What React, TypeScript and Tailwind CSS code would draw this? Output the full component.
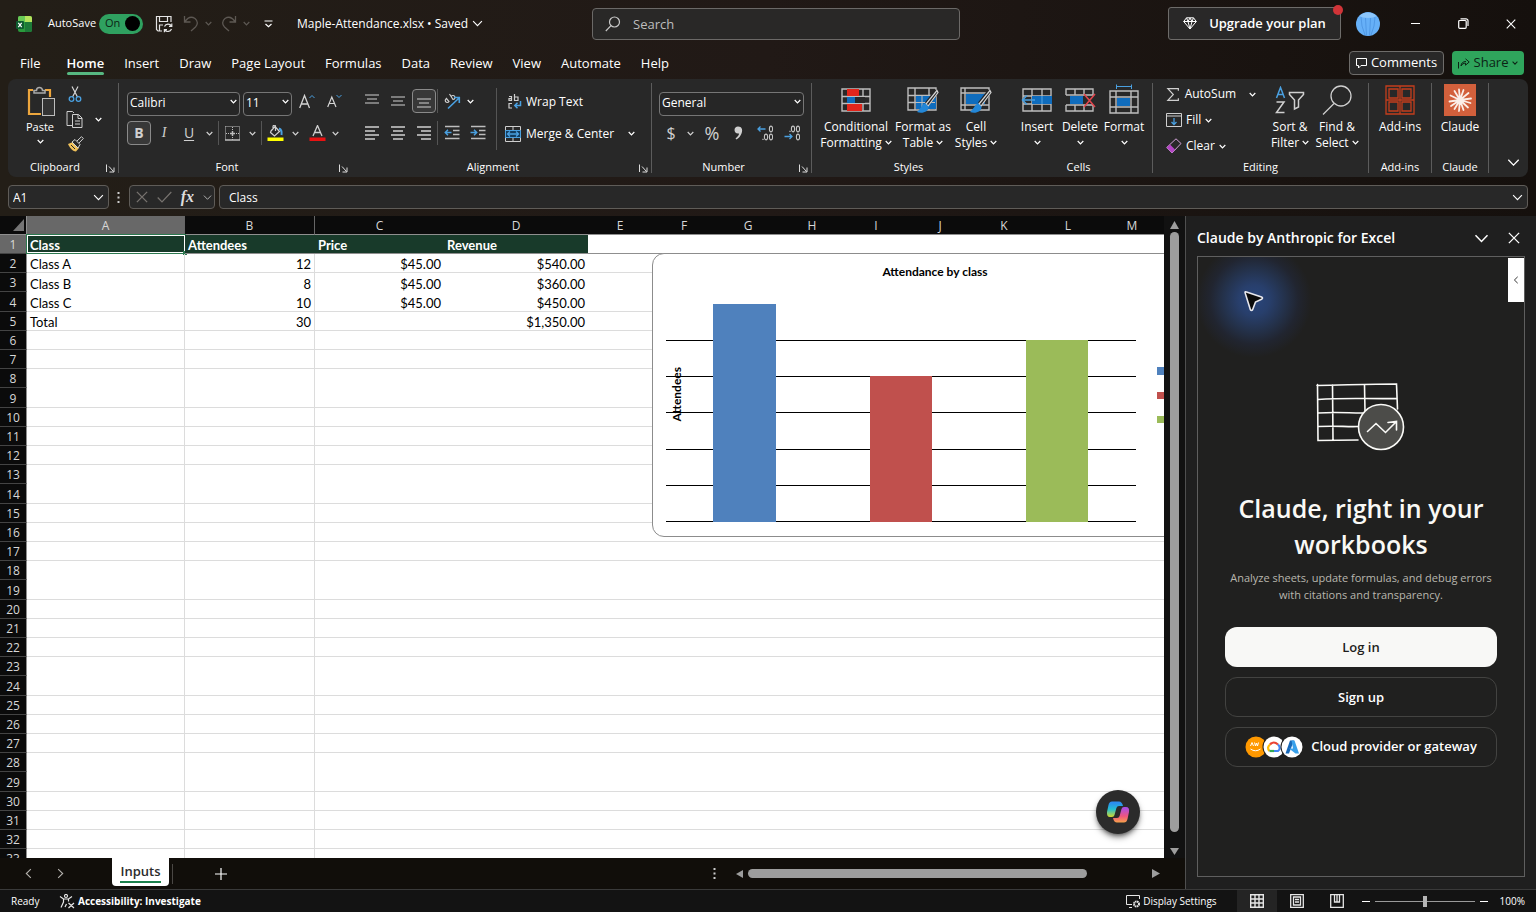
import { useState } from 'react'
import type { ReactNode } from 'react'
import clsx from 'clsx'

const TABS = ['File', 'Home', 'Insert', 'Draw', 'Page Layout', 'Formulas', 'Data', 'Review', 'View', 'Automate', 'Help']

const COLUMNS = [
  { name: 'A', width: 'w-[158px]' },
  { name: 'B', width: 'w-[130px]' },
  { name: 'C', width: 'w-[129px]' },
  { name: 'D', width: 'w-[144px]' },
  { name: 'E', width: 'w-16' },
  { name: 'F', width: 'w-16' },
  { name: 'G', width: 'w-16' },
  { name: 'H', width: 'w-16' },
  { name: 'I', width: 'w-16' },
  { name: 'J', width: 'w-16' },
  { name: 'K', width: 'w-16' },
  { name: 'L', width: 'w-16' },
  { name: 'M', width: 'w-16' },
]

const DATA = [
  ['Class', 'Attendees', 'Price', 'Revenue'],
  ['Class A', '12', '$45.00', '$540.00'],
  ['Class B', '8', '$45.00', '$360.00'],
  ['Class C', '10', '$45.00', '$450.00'],
  ['Total', '30', '', '$1,350.00'],
]

function Chevron({ size = 7, className = '' }: { size?: number; className?: string }) {
  return (
    <svg width={size} height={size} viewBox="0 0 8 8" fill="none" stroke="currentColor" strokeWidth={size > 7 ? 0.8 : 1.4} className={clsx('shrink-0', className)}>
      <path d="M0.8 2.3L4 5.6L7.2 2.3" />
    </svg>
  )
}

function CloseIcon({ size = 11 }: { size?: number }) {
  return (
    <svg width={size} height={size} viewBox="0 0 11 11" stroke="currentColor" strokeWidth="1.2">
      <path d="M0.8 0.8L10.2 10.2M10.2 0.8L0.8 10.2" />
    </svg>
  )
}

function ToolButton({ label, width = 'w-6', active, children }: { label: string; width?: string; active?: boolean; children: ReactNode }) {
  return (
    <button
      aria-label={label}
      className={clsx('h-6 shrink-0 flex items-center justify-center rounded', width, active && 'border border-[#8a8a8a] bg-[#383838]')}
    >
      {children}
    </button>
  )
}

function BigButton({ lines, icon, chevron = 'none', width }: { lines: string[]; icon: ReactNode; chevron?: 'none' | 'inline' | 'below'; width: string }) {
  return (
    <button className={clsx('flex flex-col items-center text-xs leading-4 whitespace-nowrap shrink-0', width)}>
      <span className="h-8 mb-[3px] flex items-center justify-center">{icon}</span>
      {lines.map((line, i) => (
        <span key={line} className="flex items-center gap-[3px]">
          {line}
          {chevron === 'inline' && i === lines.length - 1 && <Chevron className="-mt-px" />}
        </span>
      ))}
      {chevron === 'below' && <Chevron className="mt-1" />}
    </button>
  )
}

function Group({ label, width, divider, launcher, children }: { label: string; width: string; divider?: boolean; launcher?: boolean; children: ReactNode }) {
  return (
    <section className={clsx('relative h-[90px] flex flex-col shrink-0', width, divider && 'border-r border-[#5c5c5c]')}>
      <div className="flex-1 flex">{children}</div>
      <h2 className={clsx('text-[11px] leading-3 text-center', launcher && 'pr-4')}>{label}</h2>
      {launcher && (
        <button aria-label={label + ' settings'} className="absolute right-[3px] bottom-0">
          <svg width="9" height="9" viewBox="0 0 9 9" fill="none" stroke="#ddd">
            <path d="M0.5 8V0.5M3 2.5L7.5 7.5M8 3.5V8H3.5" />
          </svg>
        </button>
      )}
    </section>
  )
}

function Combo({ label, value, width }: { label: string; value: string; width: string }) {
  return (
    <div className={clsx('relative h-6 shrink-0', width)}>
      <select aria-label={label} defaultValue={value} className="w-full h-full appearance-none bg-[#262626] border border-[#767676] rounded px-[2px] pb-px text-xs">
        <option>{value}</option>
      </select>
      <Chevron className="absolute right-[3px] top-[9px] pointer-events-none" />
    </div>
  )
}

function Lines({ rows, thick }: { rows: number[][]; thick?: boolean }) {
  return (
    <svg width="16" height="16" viewBox="0 0 16 16" stroke="#d0d0d0" strokeWidth={thick ? 1.6 : 1.2}>
      {rows.map(([y, x1, x2]) => (
        <path key={y} d={`M${x1} ${y}H${x2}`} />
      ))}
    </svg>
  )
}

function Indent({ right }: { right?: boolean }) {
  return (
    <svg width="16" height="16" viewBox="0 0 16 16" fill="none" strokeWidth="1.5">
      <path stroke="#bdbdbd" d="M1 1.500H15.500M9 5.500H15.500M9 9.500H15.500M1 13.500H15.500" />
      <path stroke="#4aa0e0" d={right ? 'M0.500 7.500H6.500M4 4.800L6.700 7.500L4 10.200' : 'M7.500 7.500H1.500M4 4.800L1.300 7.500L4 10.200'} />
    </svg>
  )
}

function SheetGrid() {
  return <path fill="none" stroke="#bdbdbd" strokeWidth="1.400" d="M1 2H29V24H1ZM1 9.500H29M1 16.500H29M8 2V24M22 2V24" />
}

function Brush() {
  return (
    <>
      <path d="M30 5L20 18" stroke="#262626" strokeWidth="5" />
      <path d="M30 4.500L19 18L21 20L31 6.500Z" fill="#262626" stroke="#d5d5d5" strokeWidth="1.200" />
      <path d="M19 18C15 17 15 22 10 26C15 28 22 26 21.500 20.500Z" fill="#2387d8" />
    </>
  )
}

function TitleBar() {
  const [autoSave, setAutoSave] = useState(true)
  return (
    <header className="relative h-[47px] flex items-center text-[11px]">
      <svg className="ml-4 shrink-0" width="16" height="16" viewBox="0 0 16 16">
        <rect x="2" width="14" height="16" rx="2" fill="#2a9a3c" />
        <path d="M9 0h5a2 2 0 0 1 2 2v4H9z" fill="#b5e35c" />
        <path d="M4 0h5v6H2V2a2 2 0 0 1 2-2z" fill="#68c956" />
        <path d="M9 6h7v8a2 2 0 0 1-2 2H9z" fill="#1d7a38" />
        <rect y="5" width="8" height="8" rx="1" fill="#0e5c2f" />
        <path d="M2.300 6.800L5.700 11.200M5.700 6.800L2.300 11.200" stroke="#fff" strokeWidth="1.200" />
      </svg>
      <label className="ml-4 flex items-center gap-[7px] whitespace-nowrap">
        <span className="w-11">AutoSave</span>
        <input type="checkbox" checked={autoSave} onChange={(e) => setAutoSave(e.target.checked)} className="sr-only" />
        <span className="w-11 h-5 rounded-full bg-[#2fa160] text-[#0c2415] flex items-center justify-between pl-[6px] pr-[3px]">
          On
          <span className="size-[15px] rounded-full bg-black" />
        </span>
      </label>
      <button aria-label="Save" className="ml-3">
        <svg width="18" height="18" viewBox="0 0 18 18" fill="none" stroke="#e4e4e4" strokeWidth="1.200">
          <path d="M7 16H3L1.500 14.500V1.500H16V7M4.500 1.500V6.500H12.500V1.500M4.500 16V10H8" />
          <path d="M9.500 11.500A4 4 0 0 1 16.500 11M16.800 8.500V11.300H14M16.500 14A4 4 0 0 1 9.700 15M9.400 17.300V14.700H12" />
        </svg>
      </button>
      <button aria-label="Undo" className="ml-[10px] flex items-center gap-[6px] text-[#5d5853]">
        <svg width="16" height="17" viewBox="0 0 16 17" fill="none" stroke="currentColor" strokeWidth="1.300">
          <path d="M1.500 1V7H7.500M1.800 6.800C5 2 9 1.500 12 3.500C15 6 15 9.500 12.500 12L8 16" />
        </svg>
        <Chevron />
      </button>
      <button aria-label="Redo" className="ml-[9px] flex items-center gap-[6px] text-[#5d5853]">
        <svg width="16" height="17" viewBox="0 0 16 17" fill="none" stroke="currentColor" strokeWidth="1.300">
          <path d="M14.500 1V7H8.500M14.200 6.800C11 2 7 1.500 4 3.500C1 6 1 9.500 3.500 12L8 16" />
        </svg>
        <Chevron />
      </button>
      <button aria-label="Customize toolbar" className="ml-[14px]">
        <svg width="9" height="8" viewBox="0 0 9 8" fill="none" stroke="#fff" strokeWidth="1.200">
          <path d="M0.500 1H8.500M1.500 4L4.500 6.800L7.500 4" />
        </svg>
      </button>
      <button className="ml-6 flex items-center gap-1 whitespace-nowrap text-xs">
        Maple-Attendance.xlsx • Saved
        <Chevron size={11} className="text-white" />
      </button>

      <div className="absolute left-1/2 -translate-x-1/2 ml-2 top-2 w-[368px] h-8 rounded bg-[#292827] border border-[#6b6967] flex items-center">
        <svg className="ml-3" width="16" height="16" viewBox="0 0 16 16" fill="none" stroke="#c8c8c8" strokeWidth="1.200">
          <circle cx="9.500" cy="6" r="5" />
          <path d="M6 9.700L0.800 15" />
        </svg>
        <input type="search" aria-label="Search" placeholder="Search" className="ml-3 h-full flex-1 bg-transparent text-[13px] placeholder:text-[#bdbdbd] outline-none" />
      </div>

      <div className="ml-auto mr-px flex items-center">
        <button className="relative h-[33px] w-[173px] rounded-[3px] border border-[#6e6c6a] bg-[#292828] flex items-center justify-center gap-3 text-[13px] font-semibold whitespace-nowrap">
          <svg width="14" height="13" viewBox="0 0 14 13" fill="none" stroke="#fff">
            <path d="M3.500 0.800H10.500L13.300 4.500L7 12L0.700 4.500ZM0.700 4.500H13.300M3.500 0.800L5 4.500L7 12L9 4.500L10.500 0.800M5 4.500L7 1L9 4.500" />
          </svg>
          Upgrade your plan
          <span className="absolute -top-[3px] -right-[3px] size-[10px] rounded-full bg-[#d13438]" />
        </button>
        <button aria-label="Account" className="ml-[15px] mr-[11px]">
          <svg width="24" height="24" viewBox="0 0 24 24">
            <circle cx="12" cy="12" r="12" fill="#66b0f8" />
            <path d="M3.500 4A12 12 0 0 1 20.500 4C17 6.500 7 6.500 3.500 4" fill="#8cc6fb" />
            <path d="M5 5Q5 14 9 23M9.500 6L10.500 24M14.500 6L13.500 24M19 5Q19 14 15 23" stroke="#5099e6" fill="none" />
          </svg>
        </button>
        <button aria-label="Minimize" className="w-12 flex justify-center"><span className="w-[9px] h-px bg-white" /></button>
        <button aria-label="Restore" className="w-12 flex justify-center">
          <svg width="11" height="11" viewBox="0 0 11 11" fill="none" stroke="#fff" strokeWidth="1.200">
            <rect x="0.700" y="2.500" width="7.500" height="7.800" rx="1" />
            <path d="M2.500 0.800H8A2 2 0 0 1 10 2.800V8" />
          </svg>
        </button>
        <button aria-label="Close" className="w-12 flex justify-center"><CloseIcon size={10} /></button>
      </div>
    </header>
  )
}

function RibbonTabs() {
  return (
    <nav className="h-8 flex items-center pl-[10px] pr-3 text-[13px]">
      {TABS.map((tab) => (
        <button key={tab} className={clsx('relative h-8 px-[10px] pt-[2px] whitespace-nowrap', tab === 'File' && 'mr-[6px]', tab === 'Home' && 'font-semibold')}>
          {tab}
          {tab === 'Home' && <span className="absolute left-[10px] right-[10px] bottom-1 h-[3px] rounded-full bg-[#57b881]" />}
        </button>
      ))}
      <button className="ml-auto h-6 w-[95px] rounded border border-[#6e6c6a] bg-[#292828] flex items-center justify-center gap-1">
        <svg width="11" height="11" viewBox="0 0 11 11" fill="none" stroke="#fff">
          <path d="M0.500 0.500H10.500V7.500H5L2.500 10V7.500H0.500Z" />
        </svg>
        Comments
      </button>
      <button className="ml-2 h-6 w-[72px] rounded bg-[#2fa55c] text-[#0c2415] flex items-center justify-center gap-1">
        <svg width="12" height="11" viewBox="0 0 12 11" fill="none" stroke="currentColor">
          <path d="M0.500 4V10.500M3 8C3.200 5 5 3.500 8 3.500M7.500 0.800L11.200 4L7.500 7.200V5.200C5.500 5.200 4.200 6 3 8" />
        </svg>
        Share
        <Chevron size={6} />
      </button>
    </nav>
  )
}

function Ribbon() {
  return (
    <div className="mx-2 h-[98px] pt-1 rounded-lg bg-[#282828] flex shrink-0 overflow-hidden">
      <Group label="Clipboard" width="w-[111px]" divider launcher>
        <button className="ml-2 w-12 pt-[3px] flex flex-col items-center text-[11px] leading-4">
          <svg className="ml-1 mb-[2px]" width="30" height="31" viewBox="0 0 30 31" fill="none">
            <path d="M6 4H2V28H14M18 4H23V11" stroke="#eda63d" strokeWidth="2.200" />
            <path d="M7 7V4.500H9.500A3 3 0 0 1 15.500 4.500H18V7Z" stroke="#aaa" strokeWidth="1.500" />
            <rect x="15.500" y="12.500" width="12" height="17" fill="#333" stroke="#bdbdbd" />
          </svg>
          Paste
          <Chevron className="mt-[3px]" />
        </button>
        <div className="ml-[2px] pt-[3px] flex flex-col items-center gap-2">
          <button aria-label="Cut">
            <svg width="16" height="17" viewBox="0 0 16 17" fill="none">
              <path d="M5 0.500L10.500 11M11 0.500L5.500 11" stroke="#d5d5d5" strokeWidth="1.200" />
              <circle cx="4.500" cy="13" r="2.300" stroke="#4aa0e0" strokeWidth="1.300" />
              <circle cx="11.500" cy="13" r="2.300" stroke="#4aa0e0" strokeWidth="1.300" />
            </svg>
          </button>
          <button aria-label="Copy">
            <svg width="18" height="17" viewBox="0 0 18 17" fill="none" stroke="#cfcfcf">
              <path d="M6 14.500H1V0.500H6.500L8 2M6.500 3.500H12.500L16 7V16.500H6.500ZM12 3.500V7.500H16M9 10H14M9 13H14" />
            </svg>
          </button>
          <button aria-label="Format painter">
            <svg width="17" height="16" viewBox="0 0 17 16">
              <path d="M1 8L6 6L12 12L9 15.500C5 15 3 12 1 8Z" fill="#f0c15a" />
              <path d="M5 6L8 3.500L13 8.500L11 12ZM10 5L14.500 0.700L16.300 2.500L12 7" fill="#282828" stroke="#d5d5d5" />
              <path d="M4 9L8 13" stroke="#282828" />
            </svg>
          </button>
        </div>
        <button aria-label="Copy options" className="ml-[11px] mt-[30px] h-3"><Chevron /></button>
      </Group>

      <Group label="Font" width="w-[232px]" launcher>
        <div className="pl-2 pt-[6px] flex flex-col gap-2">
          <div className="flex items-center gap-[3px]">
            <Combo label="Font" value="Calibri" width="w-[113px]" />
            <Combo label="Font size" value="11" width="w-[49px]" />
            <ToolButton label="Increase font size">
              <svg width="16" height="15" viewBox="0 0 16 15" fill="none"><path d="M0.700 14L5.500 1.500L10.500 14M2.300 10H8.900" stroke="#d5d5d5" strokeWidth="1.300" /><path d="M10.500 4L13 1.500L15.500 4" stroke="#4aa0e0" /></svg>
            </ToolButton>
            <ToolButton label="Decrease font size">
              <svg width="15" height="14" viewBox="0 0 15 14" fill="none"><path d="M0.700 13L4.800 3L9 13M2.200 9.500H7.500" stroke="#d5d5d5" strokeWidth="1.200" /><path d="M9.500 1L12 3.500L14.500 1" stroke="#4aa0e0" /></svg>
            </ToolButton>
          </div>
          <div className="flex items-center text-sm text-[#d0d0d0]">
            <ToolButton label="Bold" active><b>B</b></ToolButton>
            <ToolButton label="Italic" width="w-[26px]"><i className="font-['Liberation_Serif',serif]">I</i></ToolButton>
            <ToolButton label="Underline"><span className="underline underline-offset-2">U</span></ToolButton>
            <ToolButton label="Underline options" width="w-4"><Chevron /></ToolButton>
            <span className="w-px h-6 mx-px bg-[#555]" />
            <ToolButton label="Borders">
              <svg width="15" height="15" viewBox="0 0 15 15" fill="none" stroke="#bdbdbd"><path strokeDasharray="1 1" d="M0.500 0.500H14.500V14M0.500 0.500V14M7.500 1V14M1 7.500H14" /><path d="M0 14H15M7.500 5V10M5 7.500H10" strokeWidth="1.500" /></svg>
            </ToolButton>
            <ToolButton label="Border options" width="w-4"><Chevron /></ToolButton>
            <span className="w-px h-6 mx-px bg-[#555]" />
            <ToolButton label="Fill color">
              <svg width="17" height="17" viewBox="0 0 17 17" fill="none">
                <path d="M4 6L8 1.500L12.500 6.500L7.500 11L3.500 7.500ZM6 4V1.500A1.200 1.200 0 0 1 8.500 1.500V6" stroke="#cfcfcf" strokeWidth="1.200" />
                <path d="M12 3.500C14.500 4.500 15 7 14.500 10" stroke="#4aa0e0" strokeWidth="2" />
                <path d="M0.500 12.500H16.500V16H0.500Z" fill="#ff0" />
              </svg>
            </ToolButton>
            <ToolButton label="Fill options" width="w-4"><Chevron /></ToolButton>
            <ToolButton label="Font color" width="w-7">
              <svg width="17" height="17" viewBox="0 0 17 17" fill="none"><path d="M4 11L8.500 0.500L13 11M5.500 7.500H11.500" stroke="#cfcfcf" strokeWidth="1.300" /><path d="M0.500 12.500H16.500V16H0.500Z" fill="#e81212" /></svg>
            </ToolButton>
            <ToolButton label="Font color options" width="w-2"><Chevron /></ToolButton>
          </div>
        </div>
      </Group>

      <Group label="Alignment" width="w-[301px]" divider launcher>
        <div className="pl-[9px] pt-[6px] flex flex-col gap-2">
          <div className="flex items-center gap-[2px]">
            <ToolButton label="Top align"><Lines rows={[[2, 1, 15], [6, 3, 13], [10, 1, 15]]} /></ToolButton>
            <ToolButton label="Middle align"><Lines rows={[[4, 1, 15], [8, 3, 13], [12, 1, 15]]} /></ToolButton>
            <ToolButton label="Bottom align" active><Lines rows={[[6, 1, 15], [10, 3, 13], [14, 1, 15]]} /></ToolButton>
            <span className="-ml-px w-px h-6 bg-[#555]" />
            <ToolButton label="Orientation">
              <svg width="18" height="17" viewBox="0 0 18 17" fill="none"><path d="M4 5.500A2 2 0 1 0 6 8.500L3 5M6.500 1L10 6.500A2 2 0 1 0 8 4" stroke="#cfcfcf" strokeWidth="1.200" /><path d="M5 15.500L15.500 5.500M11 4.500H16.300V10" stroke="#4aa0e0" strokeWidth="1.600" /></svg>
            </ToolButton>
            <ToolButton label="Orientation options" width="w-2"><Chevron /></ToolButton>
          </div>
          <div className="flex items-center gap-[2px]">
            <ToolButton label="Align left"><Lines thick rows={[[2, 1, 15], [6, 1, 11], [10, 1, 15], [14, 1, 11]]} /></ToolButton>
            <ToolButton label="Center"><Lines thick rows={[[2, 1, 15], [6, 3, 13], [10, 1, 15], [14, 3, 13]]} /></ToolButton>
            <ToolButton label="Align right"><Lines thick rows={[[2, 1, 15], [6, 5, 15], [10, 1, 15], [14, 5, 15]]} /></ToolButton>
            <span className="-ml-px w-px h-6 bg-[#555]" />
            <ToolButton label="Decrease indent"><Indent /></ToolButton>
            <ToolButton label="Increase indent"><Indent right /></ToolButton>
          </div>
        </div>
        <div className="ml-[6px] mt-[5px] h-[62px] pl-2 border-l border-[#555] flex flex-col gap-2 text-xs">
          <button className="h-6 mt-px pt-px flex items-center gap-1 whitespace-nowrap">
            <svg width="17" height="17" viewBox="0 0 17 17" fill="none" strokeWidth="1.200">
              <path stroke="#cfcfcf" d="M4 3.500H6.500V7.500H4V5.700H6.500M9.500 1V7.500H13V4H9.500M7 10.500H4V15H7" />
              <path stroke="#4aa0e0" strokeWidth="1.500" d="M15.500 8V12.500H10M12.500 9.800L9.800 12.500L12.500 15.200" />
            </svg>
            Wrap Text
          </button>
          <button className="h-6 pt-px flex items-center gap-1 whitespace-nowrap">
            <svg width="17" height="16" viewBox="0 0 17 16" fill="none">
              <path stroke="#cfcfcf" d="M0.500 0.500H15.500V15.500H0.500ZM8 0.500V4M8 12V15.500" />
              <path fill="#123c5e" stroke="#4aa0e0" d="M0.500 4.500H15.500V11.500H0.500Z" />
              <path stroke="#4aa0e0" strokeWidth="1.300" d="M2.500 8H13.500M5 5.500L2.500 8L5 10.500M11 5.500L13.500 8L11 10.500" />
            </svg>
            <span className="w-[98px] text-left">Merge &amp; Center</span>
            <Chevron />
          </button>
        </div>
      </Group>

      <Group label="Number" width="w-40" divider launcher>
        <div className="pl-[7px] pt-[6px] flex flex-col gap-2">
          <Combo label="Number format" value="General" width="w-[145px]" />
          <div className="flex items-center text-[#d0d0d0]">
            <ToolButton label="Currency"><span className="text-base">$</span></ToolButton>
            <ToolButton label="Currency options" width="w-[14px]"><Chevron /></ToolButton>
            <ToolButton label="Percent" width="w-[30px]"><span className="text-lg">%</span></ToolButton>
            <ToolButton label="Comma style" width="w-[22px]"><svg width="9" height="14" viewBox="0 0 9 14" fill="#cfcfcf"><path d="M4 0.500C8 0.500 9 4 7.500 7.500C6.500 10 5 12 2.500 13.500L1.500 12.500C4 10.500 5 9 5 7.500C2 8 0.500 6 0.500 4C0.500 2 2 0.500 4 0.500" /></svg></ToolButton>
            <ToolButton label="Increase decimal" width="w-8"><DecimalIcon /></ToolButton>
            <ToolButton label="Decrease decimal" width="w-[22px]"><DecimalIcon less /></ToolButton>
          </div>
        </div>
      </Group>

      <Group label="Styles" width="w-[193px]">
        <div className="pl-2 pt-[1px] flex">
          <BigButton width="w-[72px]" lines={['Conditional', 'Formatting']} chevron="inline" icon={
            <svg width="30" height="26" viewBox="0 0 30 26"><SheetGrid /><path d="M6 2H18V9H6ZM6 17H21V24H6Z" fill="#e1251b" /><path d="M6 10H14V16H6Z" fill="#0f6cbd" /><path d="M14 10H24V16H14Z" fill="#282828" /></svg>
          } />
          <BigButton width="w-[62px]" lines={['Format as', 'Table']} chevron="inline" icon={
            <svg width="32" height="28" viewBox="0 0 32 28"><SheetGrid /><path d="M9 10H29V23H9Z" fill="#0f6cbd" /><path d="M15 9V24M9 16.500H28" stroke="#bdbdbd" /><Brush /></svg>
          } />
          <BigButton width="w-11" lines={['Cell', 'Styles']} chevron="inline" icon={
            <svg width="32" height="28" viewBox="0 0 32 28"><path fill="none" stroke="#bdbdbd" strokeWidth="1.400" d="M1 2H29V24H1ZM5 2V24M1 7H29M1 19H29" /><path d="M6 8H25V18H6Z" fill="#0f6cbd" /><Brush /></svg>
          } />
        </div>
      </Group>

      <Group label="Cells" width="w-[148px]" divider>
        <div className="pl-[11px] pt-[1px] flex">
          <BigButton width="w-[42px]" lines={['Insert']} chevron="below" icon={
            <svg width="32" height="26" viewBox="0 0 32 26"><path fill="none" stroke="#bdbdbd" strokeWidth="1.400" d="M2 2H30V24H2ZM2 9H30M2 17H30M11 2V24M21 2V24" /><path d="M11 9H31V17H11Z" fill="#0f6cbd" /><path d="M21 9V17" stroke="#58a8e6" /><path d="M14 13H1.500M6 8.500L1.500 13L6 17.500" fill="none" stroke="#4aa0e0" strokeWidth="1.500" /></svg>
          } />
          <BigButton width="w-11" lines={['Delete']} chevron="below" icon={
            <svg width="31" height="26" viewBox="0 0 31 26"><path fill="none" stroke="#bdbdbd" strokeWidth="1.400" d="M1 8V2H28V8M1 18V24H28V18M1 8H28M1 18H28M10 2V8M19 2V8M10 18V24M19 18V24" /><path d="M5 9H18V17H5Z" fill="#0f6cbd" /><path d="M19 7L30 20M30 7L19 20" stroke="#e0444c" strokeWidth="1.600" /></svg>
          } />
          <BigButton width="w-11" lines={['Format']} chevron="below" icon={
            <svg width="30" height="32" viewBox="0 0 30 32"><path fill="none" stroke="#bdbdbd" strokeWidth="1.400" d="M1 7H29V29H1ZM1 13H29M1 23H29M7 7V29M22 7V29" /><path d="M8 14H21V22H8Z" fill="#0f6cbd" /><path d="M7.500 0.500V5M22.500 0.500V5M7.500 2.500H22.500" stroke="#4aa0e0" /></svg>
          } />
        </div>
      </Group>

      <Group label="Editing" width="w-[216px]" divider>
        <div className="pl-[13px] pt-[2px] w-[103px] flex flex-col gap-2 text-xs">
          <button className="h-[18px] flex items-center gap-1 whitespace-nowrap">
            <svg width="16" height="15" viewBox="0 0 16 15" fill="none" stroke="#cfcfcf" strokeWidth="1.300"><path d="M13.500 3.500V1H2L8 7.500L2 14H13.500V11.500" /></svg>
            <span className="w-[66px] text-left">AutoSum</span>
            <Chevron />
          </button>
          <button className="h-[18px] flex items-center gap-1 whitespace-nowrap">
            <svg width="16" height="14" viewBox="0 0 16 14" fill="none"><path d="M0.500 0.500H15.500V13.500H0.500ZM0.500 3H15.500" stroke="#cfcfcf" /><path d="M8 5V11.500M5.500 9L8 11.500L10.500 9" stroke="#4aa0e0" strokeWidth="1.300" /></svg>
            Fill <Chevron />
          </button>
          <button className="h-[18px] flex items-center gap-1 whitespace-nowrap">
            <svg width="16" height="16" viewBox="0 0 16 16" fill="none"><path d="M0.700 9.500L10 0.800L15 5.500L6 15Z" stroke="#d0a3d6" /><path d="M0.700 9.500L4 6.500L9 11.500L6 15Z" fill="#b345c4" /></svg>
            Clear <Chevron />
          </button>
        </div>
        <div className="pt-[1px] flex">
          <BigButton width="w-[68px]" lines={['Sort &', 'Filter']} chevron="inline" icon={
            <svg width="30" height="28" viewBox="0 0 30 28" fill="none" strokeWidth="1.500"><path d="M1.500 12L5.500 1.500L9.500 12M3 8.500H8" stroke="#4aa0e0" /><path d="M1.500 16H9L1.500 26.500H9.500" stroke="#cfcfcf" /><path d="M14.500 6.500H28.500V8.500L23.500 14V21L19.500 23V14L14.500 8.500Z" stroke="#cfcfcf" /></svg>
          } />
          <BigButton width="w-[26px]" lines={['Find &', 'Select']} chevron="inline" icon={
            <svg width="30" height="31" viewBox="0 0 30 31" fill="none" stroke="#cfcfcf" strokeWidth="1.300"><circle cx="19" cy="11" r="10" /><path d="M12 18.500L1 29.500" /></svg>
          } />
        </div>
      </Group>

      <Group label="Add-ins" width="w-[63px]" divider>
        <div className="pt-[1px] w-full flex justify-center">
          <BigButton width="w-14" lines={['Add-ins']} icon={
            <svg width="30" height="30" viewBox="0 0 30 30" fill="none" stroke="#c43e1c" strokeWidth="1.300"><path d="M1 1H29V29H1ZM4 4H13V13H4ZM17 4H26V13H17ZM4 17H13V26H4ZM17 17H26V26H17Z" /><path d="M15 1V29M1 15H29" /></svg>
          } />
        </div>
      </Group>

      <Group label="Claude" width="w-[57px]" divider>
        <div className="pt-[1px] w-full flex justify-center">
          <BigButton width="w-12" lines={['Claude']} icon={
            <svg width="32" height="32" viewBox="0 0 32 32" stroke="#fbeee8" strokeWidth="1.800" strokeLinecap="round">
              <rect width="32" height="32" fill="#d2603c" stroke="none" />
              <path d="M16 16L15 5.500M16 16L19.500 6M16 16L24.500 9M16 16L27 14.500M16 16L26.500 19M16 16L24 23.500M16 16L19.500 26M16 16L15 27M16 16L10.500 25M16 16L7 22M16 16L5.500 17.500M16 16L6.500 11.500M16 16L10.500 7" />
            </svg>
          } />
        </div>
      </Group>
      <button aria-label="Collapse ribbon" className="ml-auto mr-2 self-end mb-2"><Chevron size={13} /></button>
    </div>
  )
}

function DecimalIcon({ less }: { less?: boolean }) {
  const zero = (x: number, y: number) => <ellipse key={`${x}-${y}`} cx={x} cy={y} rx="1.600" ry="2.900" stroke="#c4c4c4" strokeWidth="1.100" />
  return (
    <svg width="16" height="16" viewBox="0 0 16 16" fill="none">
      {less ? [zero(9, 4), zero(14, 4), zero(14, 12)] : [zero(14, 4), zero(9, 12), zero(14, 12)]}
      <path d={less ? 'M6 7V5.700' : 'M6 15V13.700'} stroke="#c4c4c4" strokeWidth="1.200" />
      <path d={less ? 'M0.500 11.500H8M5.500 9L8 11.500L5.500 14' : 'M8.500 4H1M3.500 1.500L1 4L3.500 6.500'} stroke="#4aa0e0" strokeWidth="1.300" />
    </svg>
  )
}

function FormulaBar() {
  return (
    <div className="mx-2 mt-2 mb-[7px] h-6 flex items-center shrink-0 text-xs">
      <div className="w-[101px] h-6 shrink-0 rounded border border-[#5f5c58] bg-[#282828] flex items-center pr-1">
        <input aria-label="Name box" defaultValue="A1" className="min-w-0 flex-1 h-full pl-1 pt-px bg-transparent outline-none" />
        <Chevron size={11} />
      </div>
      <svg className="ml-2 mr-[9px] shrink-0" width="3" height="11" viewBox="0 0 3 11" fill="#ccc"><path d="M0.500 0h2v2h-2zM0.500 4.500h2v2h-2zM0.500 9h2v2h-2z" /></svg>
      <div className="w-[86px] h-6 shrink-0 rounded border border-[#5f5c58] bg-[#282828] flex items-center justify-between pl-[6px] pr-[2px] text-[#77736f]">
        <button aria-label="Cancel"><CloseIcon size={12} /></button>
        <button aria-label="Enter"><svg width="15" height="12" viewBox="0 0 15 12" fill="none" stroke="currentColor" strokeWidth="1.200"><path d="M0.700 6.500L5 10.800L14.300 1" /></svg></button>
        <button aria-label="Insert function" className="text-[#ddd] font-['Liberation_Serif',serif] italic font-bold text-base leading-5">fx</button>
        <Chevron size={9} className="text-[#bbb]" />
      </div>
      <div className="ml-1 h-6 flex-1 rounded border border-[#5f5c58] bg-[#282828] flex items-center pr-1">
        <input aria-label="Formula" defaultValue="Class" className="flex-1 h-full pl-[9px] pt-px bg-transparent outline-none" />
        <Chevron size={11} />
      </div>
    </div>
  )
}

function AttendanceChart() {
  return (
    <figure className="absolute left-[652px] top-[37px] w-[566px] h-[284px] rounded-xl border border-[#8c8c8c] bg-white text-black font-['Lato',sans-serif] text-xs font-bold">
      <figcaption className="pt-[10px] leading-4 text-center">Attendance by class</figcaption>
      <svg className="absolute left-[13px] top-[50px]" width="510" height="222" viewBox="0 0 510 222" shapeRendering="crispEdges">
        <path stroke="#000" d="M0 36.500H470M0 72.500H470M0 108.500H470M0 145.500H470M0 181.500H470M0 217.500H470" />
        <path fill="#4f81bd" d="M47 0H110V218H47ZM491 63H499V71H491Z" />
        <path fill="#c0504d" d="M204 72H266V218H204ZM491 88H499V95H491Z" />
        <path fill="#9bbb59" d="M360 36H422V218H360ZM491 112H499V119H491Z" />
      </svg>
      <span className="absolute left-4 top-[113px] leading-4 [writing-mode:vertical-rl] rotate-180">Attendees</span>
    </figure>
  )
}

function Sheet() {
  return (
    <div className="relative flex-1 min-w-0 overflow-hidden bg-white text-black">
      <table className="table-fixed w-[1164px] min-w-full border-separate border-spacing-0 font-['Lato',sans-serif] text-[13px] leading-4">
        <colgroup>
          <col className="w-[27px]" />
          {COLUMNS.map((c) => <col key={c.name} className={c.width} />)}
        </colgroup>
        <thead className="font-['Open_Sans',sans-serif] text-xs leading-4">
          <tr className="h-[19px] bg-[#0b0b0b] text-[#d8d8d8]">
            <th className="p-0 border-b border-r border-[#8f8f8f]">
              <svg className="ml-auto mr-[2px]" width="11" height="12" viewBox="0 0 11 12"><path d="M11 0V12H0Z" fill="#757575" /></svg>
            </th>
            {COLUMNS.map((c, i) => (
              <th key={c.name} className={clsx('p-0 pt-[2px] border-b border-b-[#8f8f8f] font-normal', i < 2 && 'border-r border-r-[#666]', i === 0 && 'bg-[#686868]')}>{c.name}</th>
            ))}
          </tr>
        </thead>
        <tbody>
          {Array.from({ length: 34 }, (_, row) => (
            <tr key={row} className={row % 5 === 3 ? 'h-5' : 'h-[19px]'}>
              <th className={clsx('p-0 pt-[2px] border-b border-r border-b-[#444] border-r-[#8f8f8f] font-normal text-xs leading-4 font-[\'Open_Sans\',sans-serif] text-[#d8d8d8]', row === 0 ? 'bg-[#686868]' : 'bg-[#0b0b0b]')}>{row + 1}</th>
              {COLUMNS.map((c, col) => (
                <td
                  key={c.name}
                  className={clsx(
                    'relative p-0 pt-[2px] px-[3px] whitespace-nowrap',
                    row === 0 && col < 4 && 'bg-[#183a2a] text-white font-bold',
                    row === 0 && 'border-b border-b-[#8f8f8f]',
                    row > 0 && row % 5 !== 2 && 'border-b border-b-[#dcdcdc]',
                    row > 0 && col < 2 && 'border-r border-r-[#dcdcdc]',
                    row > 0 && col > 0 && 'text-right',
                  )}
                >
                  {DATA[row]?.[col]}
                  {row === 0 && col === 0 && (
                    <span className="absolute -inset-px border border-[#2c7a50] ring-1 ring-inset ring-white">
                      <span className="absolute -right-[2px] -bottom-[2px] size-1 bg-[#2c7a50]" />
                    </span>
                  )}
                </td>
              ))}
            </tr>
          ))}
        </tbody>
      </table>
      <AttendanceChart />
      <button aria-label="Copilot" className="absolute right-6 bottom-6 size-11 rounded-full bg-[#2b2b2b] shadow-md shadow-black/50 flex items-center justify-center">
        <svg width="24" height="24" viewBox="0 0 24 24">
          <defs>
            <linearGradient id="coolRibbon" x1="0" y1="0" x2="0" y2="1">
              <stop offset="0.1" stopColor="#2b8df0" />
              <stop offset="0.5" stopColor="#25bfd0" />
              <stop offset="1" stopColor="#d4d92c" />
            </linearGradient>
            <linearGradient id="warmRibbon" x1="0" y1="0" x2="0" y2="1">
              <stop offset="0" stopColor="#a34df0" />
              <stop offset="0.6" stopColor="#f0567d" />
              <stop offset="1" stopColor="#f7a24a" />
            </linearGradient>
          </defs>
          <path d="M6 1.500H13Q16 1.500 17 6H13Q11 6 10.400 8L8.500 15Q8 17 6 17H4Q0.500 17 1 12L2.500 5Q3.200 1.500 6 1.500Z" fill="url(#coolRibbon)" />
          <path d="M18 7H20Q23.700 7 23 12L21.500 19Q20.700 22.500 18 22.500H11Q8 22.500 7 18H11Q13 18 13.600 16L15.500 9Q16 7 18 7Z" fill="url(#warmRibbon)" />
        </svg>
      </button>
    </div>
  )
}

function SheetTabs() {
  return (
    <div className="h-[31px] flex items-center shrink-0 bg-[#110e0a] text-[#b5b2ae]">
      <button aria-label="Previous sheet" className="ml-[23px]"><Chevron size={11} className="rotate-90" /></button>
      <button aria-label="Next sheet" className="ml-[21px]"><Chevron size={11} className="-rotate-90" /></button>
      <button className="ml-[46px] self-start w-[57px] h-7 rounded-b bg-white text-[#2b2b2b] text-[13px] font-semibold flex flex-col items-center justify-center">
        <span className="border-b-2 border-[#1a7f4b] leading-5">Inputs</span>
      </button>
      <span className="ml-[3px] w-px h-5 bg-[#4a4744]" />
      <button aria-label="New sheet" className="ml-[42px] text-white">
        <svg width="12" height="12" viewBox="0 0 12 12" stroke="currentColor" strokeWidth="1.200"><path d="M6 0V12M0 6H12" /></svg>
      </button>
      <div className="ml-auto w-[451px] flex items-center">
        <svg width="3" height="11" viewBox="0 0 3 11" fill="#ccc"><path d="M0.500 0h2v2h-2zM0.500 4.500h2v2h-2zM0.500 9h2v2h-2z" /></svg>
        <svg className="ml-5" width="7" height="8" viewBox="0 0 7 8"><path d="M7 0V8L0 4Z" fill="#9d9d9d" /></svg>
        <div className="ml-[5px] flex-1"><div className="w-[339px] h-[9px] rounded-full bg-[#9d9d9d]" /></div>
        <svg className="mr-1" width="8" height="9" viewBox="0 0 8 9"><path d="M0 0V9L8 4.500Z" fill="#9d9d9d" /></svg>
      </div>
      <span className="w-[21px]" />
    </div>
  )
}

function ClaudePane() {
  return (
    <aside className="w-[351px] shrink-0 border-l border-[#4f4f4f] bg-[#1f1f1f] pl-[11px] pr-[11px] pb-3 flex flex-col">
      <div className="h-10 pt-1 flex items-center shrink-0">
        <h2 className="text-sm font-semibold flex-1 whitespace-nowrap">Claude by Anthropic for Excel</h2>
        <button aria-label="Pane options"><Chevron size={15} /></button>
        <button aria-label="Close pane" className="ml-[19px] mr-[5px]"><CloseIcon size={12} /></button>
      </div>
      <div className="relative flex-1 overflow-hidden border border-[#5f5f5f] bg-[#20201f] px-[27px] pt-[126px] flex flex-col items-center text-center">
        <div className="absolute -left-1 -top-[17px] size-[120px] bg-[radial-gradient(circle,#29457c_0%,#283f6c_18%,#24324c_36%,#212530_52%,#20201f_68%)]" />
        <svg className="absolute left-[46px] top-[34px]" width="20" height="21" viewBox="0 0 20 21">
          <path d="M1 1.500Q1 0.500 2.500 1L17.500 6Q19.500 7 17.500 8.300L11.500 11L8.700 18.500Q7.500 20.500 6.300 18.500Z" fill="#0b0b0b" stroke="#e8e8ee" strokeWidth="1.600" />
        </svg>
        <button aria-label="Expand" className="absolute right-0 top-px w-4 h-11 bg-white text-black flex items-center justify-center">
          <Chevron size={8} className="rotate-90" />
        </button>
        <svg className="shrink-0" width="90" height="68" viewBox="0 0 90 68" fill="none" stroke="#fafaf7" strokeWidth="1.600" strokeLinecap="round">
          <path d="M1.500 1.500L2 57.500L42 57M1 2.500C30 2 55 1 80.500 1L81.500 26M2 16.500C30 14.500 50 16 81 15.500M2 30C25 28.500 35 30.500 50 30M2 43.500C20 42.500 30 44 42 43.500M16.500 2L17 57M48.500 2L49 28" />
          <circle cx="65" cy="44" r="22.500" fill="#4c4c49" />
          <path d="M51.500 48.500L60 40.500L69.500 49.500L80.500 38.500M72 39.500L80.500 38.500L80.500 47" />
        </svg>
        <h1 className="mt-[39px] text-[25px] leading-9 font-semibold text-[#faf9f5]">Claude, right in your<br />workbooks</h1>
        <p className="mt-[7px] -mx-4 text-[11px] leading-[17px] text-[#b9b7ae]">Analyze sheets, update formulas, and debug errors<br />with citations and transparency.</p>
        <div className="mt-6 w-full flex flex-col gap-[10px] text-[13px] font-semibold">
          <button className="h-10 pt-px rounded-xl bg-[#f8f8f6] text-[#1f1e1d]">Log in</button>
          <button className="h-10 pt-px rounded-xl border border-[#434341]">Sign up</button>
          <button className="h-10 rounded-xl border border-[#434341] flex items-center justify-center gap-2 whitespace-nowrap">
            <svg width="58" height="22" viewBox="0 0 58 22" fill="none">
              <circle cx="11" cy="11" r="10.500" fill="#f90" />
              <path d="M5.500 10L7 6.500L8.500 10M9.500 6.500L10.500 10L11.500 7L12.500 10L13.500 6.500M5.500 13Q10.500 16.500 15.500 13" stroke="#fff" />
              <circle cx="29" cy="11" r="11.500" fill="#20201f" />
              <circle cx="29" cy="11" r="10.500" fill="#fff" />
              <path d="M25 8.500Q28.500 4.500 33 8.500" stroke="#ea4335" strokeWidth="2.200" />
              <path d="M25 8.500Q21.500 11.500 24.500 15" stroke="#fbbc05" strokeWidth="2.200" />
              <path d="M24.500 15H29" stroke="#34a853" strokeWidth="2.200" />
              <path d="M29 15H33Q36.500 12 33 8.500" stroke="#4285f4" strokeWidth="2.200" />
              <circle cx="47" cy="11" r="11.500" fill="#20201f" />
              <circle cx="47" cy="11" r="10.500" fill="#fff" />
              <path d="M45 4.500H49L44 17.500H40.500Z" fill="#1668b8" />
              <path d="M46.500 4.500H49.500L54 17.500H50.500L44 12.500H48Z" fill="#38a0ea" />
            </svg>
            Cloud provider or gateway
          </button>
        </div>
      </div>
    </aside>
  )
}

function StatusBar() {
  return (
    <footer className="h-[23px] shrink-0 border-t border-[#3a3a3a] bg-[#131313] flex items-center text-[10px] whitespace-nowrap">
      <span className="ml-[11px] w-12">Ready</span>
      <button className="flex items-center gap-[3px] font-bold">
        <svg width="16" height="15" viewBox="0 0 16 15" fill="none" stroke="#e6e6e6" strokeWidth="1.200">
          <circle cx="7" cy="2" r="1.500" />
          <path d="M1 2.500L4.500 5H9.500L13 2.500M4.500 5V8L2 13.500M9.500 5V7.500M6 13L7.500 10M9.500 9L15 14M15 9L9.500 14" />
        </svg>
        Accessibility: Investigate
      </button>
      <button className="ml-auto mr-5 flex items-center gap-[2px]">
        <svg width="15" height="13" viewBox="0 0 15 13" fill="none" stroke="#e6e6e6">
          <path d="M6 9.500H0.500V0.500H13.500V4M3 12.500H6" />
          <circle cx="10.500" cy="9" r="2.500" strokeWidth="2" strokeDasharray="1.500 0.500" />
        </svg>
        Display Settings
      </button>
      <button aria-label="Normal view" className="w-10 h-full bg-[#242424] flex items-center justify-center">
        <svg width="14" height="14" viewBox="0 0 14 14" fill="none" stroke="#e6e6e6" strokeWidth="1.400"><path d="M0.700 0.700H13.300V13.300H0.700ZM5 0V14M9 0V14M0 5H14M0 9H14" /></svg>
      </button>
      <button aria-label="Page layout view" className="w-10 flex items-center justify-center">
        <svg width="14" height="14" viewBox="0 0 14 14" fill="none" stroke="#e6e6e6" strokeWidth="1.300"><path d="M0.700 0.700H13.300V13.300H0.700ZM3.500 3H10.500V11H3.500ZM5 5.500H9M5 8H9" /></svg>
      </button>
      <button aria-label="Page break preview" className="w-10 flex items-center justify-center">
        <svg width="14" height="14" viewBox="0 0 14 14" fill="none" stroke="#e6e6e6" strokeWidth="1.300"><path d="M0.700 0.700H13.300V13.300H0.700ZM4.500 1V8H9.500V1M7 1V8" /></svg>
      </button>
      <button aria-label="Zoom out" className="ml-[5px] w-2 h-3 flex items-center"><span className="w-2 h-px bg-white" /></button>
      <input
        type="range"
        aria-label="Zoom"
        defaultValue={50}
        className="mx-[5px] w-[100px] h-3 appearance-none bg-transparent [&::-webkit-slider-runnable-track]:h-px [&::-webkit-slider-runnable-track]:bg-[#999] [&::-webkit-slider-thumb]:appearance-none [&::-webkit-slider-thumb]:w-1 [&::-webkit-slider-thumb]:h-[11px] [&::-webkit-slider-thumb]:-mt-[5px] [&::-webkit-slider-thumb]:bg-[#b5b5b5]"
      />
      <button aria-label="Zoom in" className="w-2 h-3 flex items-center"><span className="w-2 h-px bg-white" /></button>
      <span className="ml-3 mr-[11px]">100%</span>
    </footer>
  )
}

export default function App() {
  return (
    <div className="h-screen flex flex-col overflow-hidden bg-gradient-to-r from-[#231e17] via-[#211916] to-[#15100d] text-white font-['Open_Sans',sans-serif]">
      <TitleBar />
      <RibbonTabs />
      <Ribbon />
      <FormulaBar />
      <main className="flex-1 min-h-0 flex">
        <div className="flex-1 min-w-0 flex flex-col">
          <div className="flex-1 min-h-0 flex">
            <Sheet />
            <div className="w-[21px] shrink-0 bg-[#111] pt-[5px] pb-[3px] flex flex-col items-center">
              <svg width="9" height="8" viewBox="0 0 9 8"><path d="M4.500 0L9 8H0Z" fill="#9d9d9d" /></svg>
              <div className="mt-[3px] mb-4 w-[9px] flex-1 rounded-full bg-[#9d9d9d]" />
              <svg width="9" height="7" viewBox="0 0 9 7"><path d="M0 0H9L4.500 7Z" fill="#9d9d9d" /></svg>
            </div>
          </div>
          <SheetTabs />
        </div>
        <ClaudePane />
      </main>
      <StatusBar />
    </div>
  )
}
